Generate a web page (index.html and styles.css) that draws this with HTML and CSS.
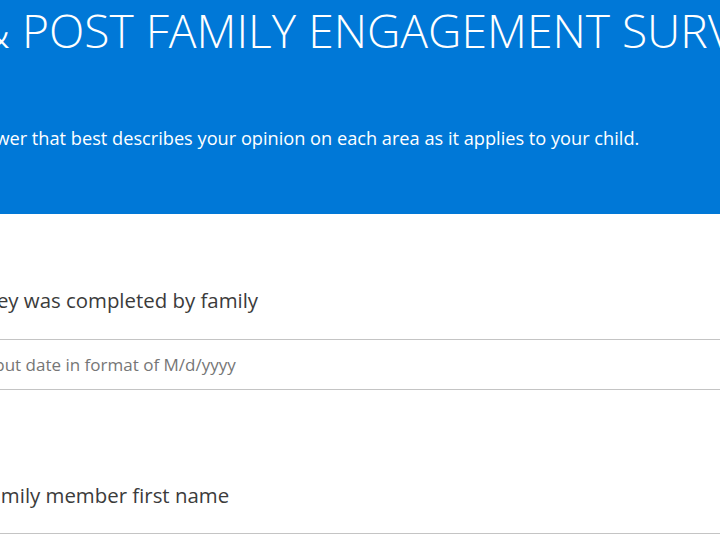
FILE: index.html
```html
<!DOCTYPE html>
<html lang="en">
<head>
<meta charset="utf-8">
<title>PRE &amp; POST FAMILY ENGAGEMENT SURVEY</title>
<link rel="stylesheet" href="styles.css">
</head>
<body>
<div class="page">
  <header class="header">
    <h1 class="title">PRE &amp; POST FAMILY ENGAGEMENT SURVEY</h1>
    <p class="subtitle">Select the answer that best describes your opinion on each area as it applies to your child.</p>
  </header>
  <main class="form">
    <section class="question q-date">
      <div class="q-title">Date survey was completed by family</div>
      <input class="q-input date-input" type="text" placeholder="Please input date in format of M/d/yyyy">
    </section>
    <section class="question q-name">
      <div class="q-title">Family member first name</div>
      <input class="q-input name-input" type="text">
    </section>
  </main>
</div>
</body>
</html>
```

FILE: styles.css
```css
html, body {
  margin: 0;
  padding: 0;
  background: #ffffff;
}
body {
  width: 720px;
  height: 540px;
  overflow: hidden;
  font-family: "Open Sans", "Noto Sans", "DejaVu Sans", sans-serif;
}
.page {
  display: flex;
  flex-direction: column;
}
.header {
  background: #0078d7;
  color: #ffffff;
  height: 214px;
  padding-top: 3px;
  box-sizing: border-box;
}
.title {
  margin: 0;
  font-weight: 300;
  font-size: 46.2px;
  line-height: 56px;
  white-space: nowrap;
  text-indent: -115px;
}
.subtitle {
  margin: 67px 0 0;
  font-size: 18.2px;
  line-height: 25px;
  white-space: nowrap;
  text-indent: -122px;
}
.form {
  display: flex;
  flex-direction: column;
}
.question {
  display: flex;
  flex-direction: column;
}
.q-title {
  font-size: 20.4px;
  line-height: 28px;
  color: #3b3b3b;
  white-space: nowrap;
}
.q-date .q-title {
  margin-top: 72px;
  text-indent: -94px;
}
.q-name .q-title {
  margin-top: 91px;
  text-indent: -21px;
}
.q-input {
  margin: 25px 0 0 -77px;
  width: 900px;
  height: 51px;
  box-sizing: border-box;
  border: 1px solid #c4c4c4;
  padding: 0;
  font-family: inherit;
  font-size: 17px;
  color: #333333;
  background: #ffffff;
  outline: none;
}
.q-input::placeholder {
  color: #767676;
}
.name-input {
  margin-top: 24px;
}
```
